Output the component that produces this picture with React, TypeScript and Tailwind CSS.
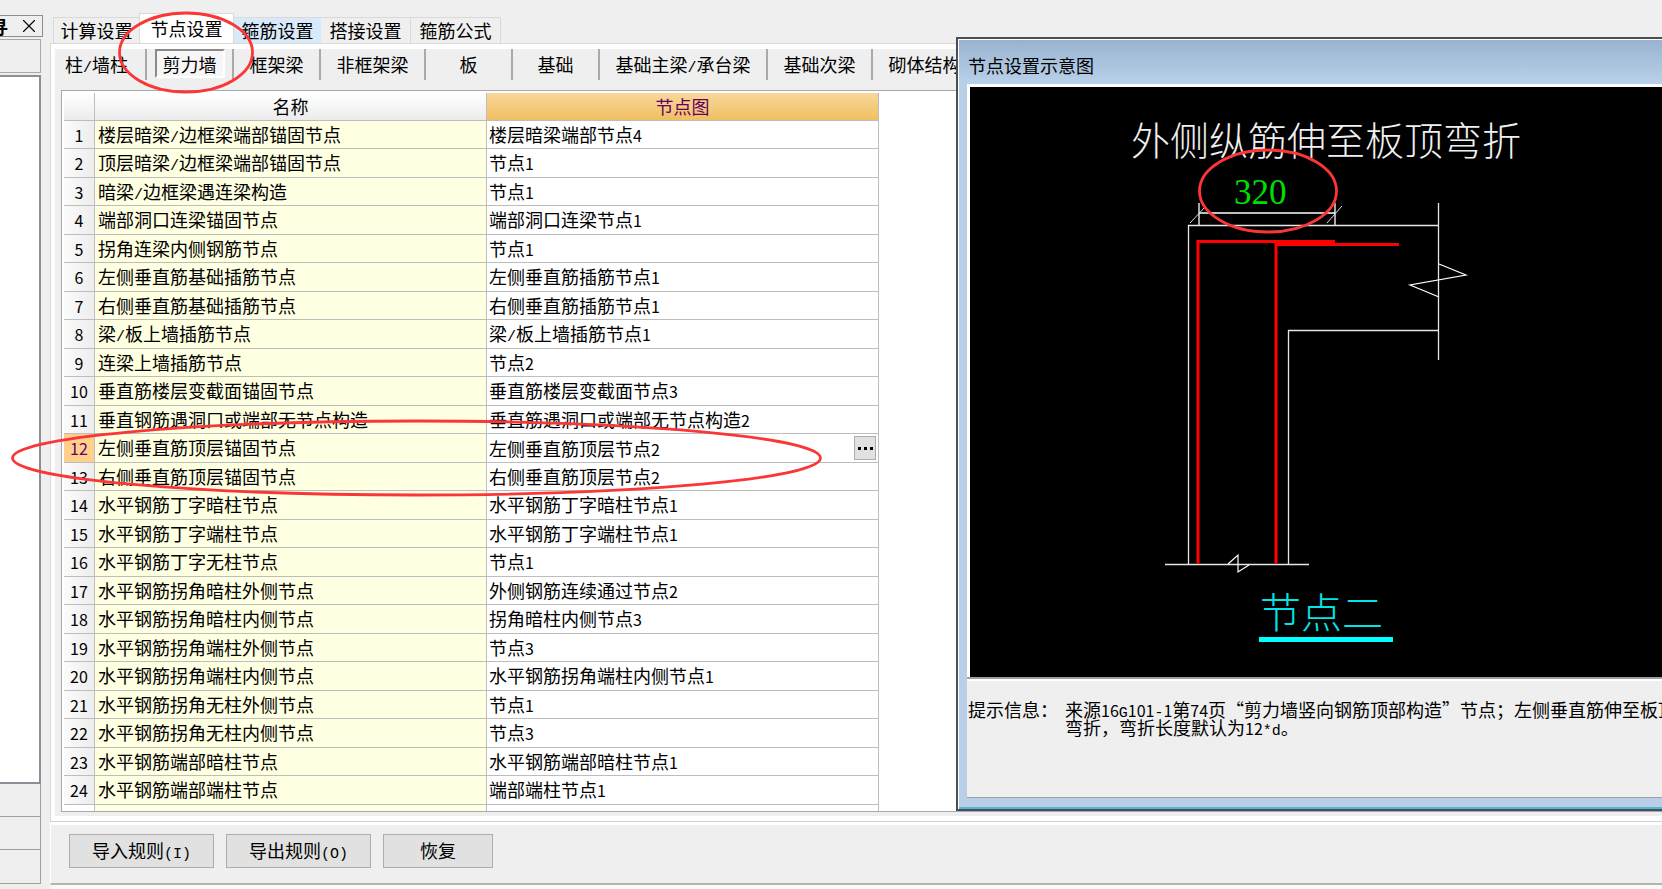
import { X } from 'lucide-react'

const tabs = [
  { label: '计算设置', style: 'h-[26px] w-[86px] border-t border-l border-[#d9d9d9]' },
  { label: '节点设置', style: 'h-[30px] w-[95px] border border-b-0 border-[#d9d9d9] bg-white' },
  { label: '箍筋设置', style: 'h-[26px] w-[87px] border-t border-[#d9d9d9] bg-[#d8e9f9]' },
  { label: '搭接设置', style: 'h-[26px] w-[90px] border-t border-r border-[#d9d9d9]' },
  { label: '箍筋公式', style: 'h-[26px] w-[90px] border-t border-r border-[#d9d9d9]' },
]

const members = [
  { label: '柱/墙柱', width: 'w-[87px] pr-3' },
  { label: '剪力墙', width: 'w-[87px]' },
  { label: '框架梁', width: 'w-[87px]' },
  { label: '非框架梁', width: 'w-[105px]' },
  { label: '板', width: 'w-[87px]' },
  { label: '基础', width: 'w-[87px]' },
  { label: '基础主梁/承台梁', width: 'w-[168px]' },
  { label: '基础次梁', width: 'w-[105px]' },
  { label: '砌体结构', width: 'w-[105px]' },
]

const rows = [
  ['楼层暗梁/边框梁端部锚固节点', '楼层暗梁端部节点4'],
  ['顶层暗梁/边框梁端部锚固节点', '节点1'],
  ['暗梁/边框梁遇连梁构造', '节点1'],
  ['端部洞口连梁锚固节点', '端部洞口连梁节点1'],
  ['拐角连梁内侧钢筋节点', '节点1'],
  ['左侧垂直筋基础插筋节点', '左侧垂直筋插筋节点1'],
  ['右侧垂直筋基础插筋节点', '右侧垂直筋插筋节点1'],
  ['梁/板上墙插筋节点', '梁/板上墙插筋节点1'],
  ['连梁上墙插筋节点', '节点2'],
  ['垂直筋楼层变截面锚固节点', '垂直筋楼层变截面节点3'],
  ['垂直钢筋遇洞口或端部无节点构造', '垂直筋遇洞口或端部无节点构造2'],
  ['左侧垂直筋顶层锚固节点', '左侧垂直筋顶层节点2'],
  ['右侧垂直筋顶层锚固节点', '右侧垂直筋顶层节点2'],
  ['水平钢筋丁字暗柱节点', '水平钢筋丁字暗柱节点1'],
  ['水平钢筋丁字端柱节点', '水平钢筋丁字端柱节点1'],
  ['水平钢筋丁字无柱节点', '节点1'],
  ['水平钢筋拐角暗柱外侧节点', '外侧钢筋连续通过节点2'],
  ['水平钢筋拐角暗柱内侧节点', '拐角暗柱内侧节点3'],
  ['水平钢筋拐角端柱外侧节点', '节点3'],
  ['水平钢筋拐角端柱内侧节点', '水平钢筋拐角端柱内侧节点1'],
  ['水平钢筋拐角无柱外侧节点', '节点1'],
  ['水平钢筋拐角无柱内侧节点', '节点3'],
  ['水平钢筋端部暗柱节点', '水平钢筋端部暗柱节点1'],
  ['水平钢筋端部端柱节点', '端部端柱节点1'],
]

// digits and Latin runs are set half as wide as the Chinese characters
function Mixed({ text }: { text: string }) {
  return (
    <span>
      {text.split(/([0-9]+|[!-/:-~]+)/).map((part, i) => {
        if (i % 2 === 0) return part
        return (
          <span
            key={i}
            className={
              /\d/.test(part)
                ? 'text-[16px] leading-[0]'
                : 'font-["Liberation_Mono",monospace] text-[15px] leading-[0]'
            }
          >
            {part}
          </span>
        )
      })}
    </span>
  )
}

function SidePanel() {
  return (
    <aside className="flex w-[43px] shrink-0 flex-col pt-[15px]">
      <div className="flex h-[22px] items-center justify-end overflow-hidden border border-l-0 border-[#8c8c8c] pr-[2px]">
        <span className="mr-[10px] font-bold">寻</span>
        <button aria-label="关闭">
          <X size={22} strokeWidth={1.2} />
        </button>
      </div>
      <div className="mt-[2px] mr-[2px] h-[34px] border border-l-0 border-[#a8a8a8]" />
      <div className="mt-[2px] mr-[2px] flex-1 border-2 border-l-0 border-[#8b8e96] bg-white" />
      <div className="mr-[2px] h-[33px] border-r border-b border-[#a0a0a0]" />
      <div className="mr-[2px] h-[33px] border-r border-b border-[#a0a0a0]" />
      <div className="mr-[2px] mb-[5px] h-[34px] border-r border-b border-[#a0a0a0]" />
    </aside>
  )
}

function TabBar() {
  return (
    <nav className="ml-[3px] flex h-[43px] items-end">
      {tabs.map((tab) => (
        <button key={tab.label} className={`${tab.style} pb-[2px]`}>
          {tab.label}
        </button>
      ))}
    </nav>
  )
}

function MemberBar() {
  return (
    <div className="flex h-[31px] shrink-0 overflow-hidden pl-[5px]">
      {members.map((m, i) => (
        <div
          key={m.label}
          className={`${m.width} flex shrink-0 items-center justify-center border-r-2 border-[#a9a9a9] pb-[2px]`}
        >
          {i === 1 ? (
            <button className="h-[29px] w-[70px] border-2 border-t-[#8a8a8a] border-r-white border-b-white border-l-[#8a8a8a] bg-[#f6f6f6]">
              {m.label}
            </button>
          ) : (
            <button>
              <Mixed text={m.label} />
            </button>
          )}
        </div>
      ))}
    </div>
  )
}

function NodeTable() {
  return (
    <div className="mt-[10px] ml-[6px] h-[722px] overflow-hidden border border-[#a5a8b4] bg-white pt-[2px] pl-[2px]">
      <table className="table-fixed border-separate border-spacing-0 text-left leading-[18px]">
        <colgroup>
          <col className="w-[31px]" />
          <col className="w-[392px]" />
          <col className="w-[392px]" />
        </colgroup>
        <thead>
          <tr className="h-[28px]">
            <th className="border-r border-b border-[#bdbdbd] bg-linear-to-b from-white to-[#ececec]" />
            <th className="border-r border-b border-[#bdbdbd] bg-linear-to-b from-white to-[#ececec] pb-[2px] text-center font-normal">
              名称
            </th>
            <th className="border-r border-b border-[#bdbdbd] bg-linear-to-b from-[#f8d899] to-[#f1bf60] pb-[2px] text-center font-normal text-[#640064]">
              节点图
            </th>
          </tr>
        </thead>
        <tbody>
          {rows.map(([name, node], i) => (
            <tr key={name} className="odd:h-[28px] even:h-[29px]">
              <th
                className={
                  i === 11
                    ? 'border-r border-b border-[#bdbdbd] bg-[#fed08b] pb-[2px] text-center font-normal text-[#640064]'
                    : 'border-r border-b border-[#bdbdbd] bg-linear-to-r from-[#fbfbfb] to-[#ededed] pb-[2px] text-center font-normal'
                }
              >
                <Mixed text={String(i + 1)} />
              </th>
              <td className="border-r border-b border-[#bdbdbd] bg-[#ffffe1] pb-[2px] pl-[3px]">
                <Mixed text={name} />
              </td>
              {i === 11 ? (
                <td className="border-r border-b border-[#bdbdbd] pl-[2px]">
                  <div className="flex items-center justify-between pr-[2px]">
                    <Mixed text={node} />
                    <button
                      aria-label="选择节点"
                      className="flex h-[24px] w-[22px] items-center justify-center gap-[3px] border border-[#adadad] bg-[#e1e1e1]"
                    >
                      <span className="size-[3px] bg-black" />
                      <span className="size-[3px] bg-black" />
                      <span className="size-[3px] bg-black" />
                    </button>
                  </div>
                </td>
              ) : (
                <td className="border-r border-b border-[#bdbdbd] pb-[2px] pl-[2px]">
                  <Mixed text={node} />
                </td>
              )}
            </tr>
          ))}
          <tr className="h-[28px]">
            <th className="border-r border-[#bdbdbd]" />
            <td className="border-r border-[#bdbdbd] bg-[#ffffe1]" />
            <td className="border-r border-[#bdbdbd]" />
          </tr>
        </tbody>
      </table>
    </div>
  )
}

function Diagram() {
  return (
    <svg
      width="692"
      height="590"
      viewBox="970 87 692 590"
      fill="none"
      className="block"
      fontFamily='"Liberation Serif", "Noto Sans CJK SC", serif'
    >
      <text x="1131" y="155" fontSize="39" fontWeight="300" fill="#f0f0f0">
        外侧纵筋伸至板顶弯折
      </text>
      <text x="1234" y="204" fontSize="35" fill="#00e000">
        320
      </text>

      {/* dimension line */}
      <path d="M1199 203V225M1335 203V225M1199 213H1335" stroke="#fff" strokeWidth="1.3" />
      <path d="M1190 223L1205 207M1327 223L1342 206" stroke="#ddd" />

      {/* slab and wall outline */}
      <path
        d="M1188.5 564V225.5H1438.5M1438.5 203V360M1438.5 330.5H1288.5V564M1165 564.5H1309"
        stroke="#e6e6e6"
        strokeWidth="1.3"
      />
      <path d="M1439 264L1466 275L1410 285L1439 297" stroke="#fff" strokeWidth="1.2" />
      <path d="M1228 564L1238 555V572L1249 565" stroke="#fff" strokeWidth="1.2" />

      {/* bars */}
      <path d="M1198 564V241.5H1335M1276 564V244.5H1399" stroke="#f00" strokeWidth="3" />

      <text x="1260" y="628" fontSize="41" fontWeight="300" fill="#00e5e5">
        节点二
      </text>
      <path d="M1259 639.5H1393" stroke="#0ff" strokeWidth="5" />
    </svg>
  )
}

function DiagramWindow() {
  return (
    <section className="absolute top-[37px] right-0 left-[956px] z-20 border-2 border-r-0 border-[#4b4f55] bg-[#b9cfe8]">
      <div className="border-t border-l border-white pl-[8px]">
        <h2 className="-ml-[8px] flex h-[44px] items-center bg-linear-to-b from-[#99b3cf] to-[#b9d1ea] pt-[6px] pl-[9px]">
          节点设置示意图
        </h2>
        <div className="border-t-3 border-l-3 border-white bg-black">
          <Diagram />
        </div>
        <div className="h-[121px] overflow-hidden border-t-2 border-b border-t-[#a0a0a0] border-b-[#a0a0a0] bg-[#efefef]">
          <div className="flex border-t-2 border-white pt-[19px] pl-px leading-[18px] whitespace-nowrap">
            <span className="w-[97px] shrink-0">提示信息：</span>
            <p>
              <Mixed text="来源16G101-1第74页“剪力墙竖向钢筋顶部构造”节点；左侧垂直筋伸至板顶" />
              <br />
              <Mixed text="弯折，弯折长度默认为12*d。" />
            </p>
          </div>
        </div>
        <div className="-ml-[8px] h-[11px] border-b-2 border-[#4fb9d3]" />
      </div>
    </section>
  )
}

function Marks() {
  return (
    <svg
      width="1400"
      height="560"
      fill="none"
      stroke="#fb3636"
      strokeWidth="2.8"
      className="pointer-events-none absolute top-0 left-0 z-30"
    >
      <ellipse cx="186" cy="52.5" rx="66.5" ry="39.5" />
      <ellipse cx="416.5" cy="458" rx="404" ry="37" />
      <ellipse cx="1268" cy="191" rx="68.5" ry="41" />
    </svg>
  )
}

export default function App() {
  return (
    <div className='relative flex min-h-screen overflow-hidden bg-[#efefef] font-["Noto_Sans_CJK_SC",sans-serif] text-[18px] leading-[20px] text-black'>
      <SidePanel />

      <main className="ml-[7px] flex min-w-0 flex-1 flex-col">
        <TabBar />
        <div className="border-t border-l border-[#d9d9d9]">
          <div className="border-y-5 border-l-4 border-white">
            <MemberBar />
            <NodeTable />
            <div className="h-[4px]" />
          </div>
        </div>
        <div className="flex flex-1 flex-col border-t border-[#d0d0d0]">
          <div className="flex flex-1 items-start gap-3 border-t-3 border-b-2 border-l border-t-white border-b-[#b4b4b4] border-l-white pt-[9px] pl-[18px]">
            <button className="h-[34px] w-[145px] border border-[#adadad] bg-[#e1e1e1] pb-[2px]">
              <Mixed text="导入规则(I)" />
            </button>
            <button className="h-[34px] w-[145px] border border-[#adadad] bg-[#e1e1e1] pb-[2px]">
              <Mixed text="导出规则(O)" />
            </button>
            <button className="h-[34px] w-[110px] border border-[#adadad] bg-[#e1e1e1] pb-[2px]">
              恢复
            </button>
          </div>
          <div className="h-[4px] bg-[#fafafa]" />
        </div>
      </main>

      <DiagramWindow />
      <Marks />
    </div>
  )
}
